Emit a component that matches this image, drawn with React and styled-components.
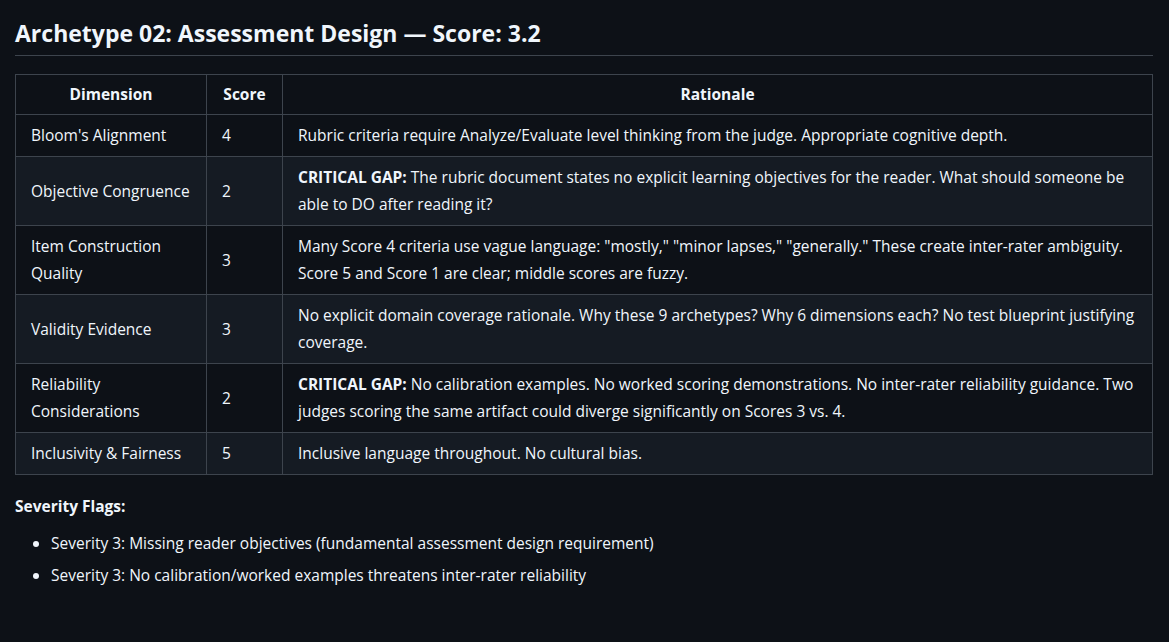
import React from "react";
import styled, { createGlobalStyle } from "styled-components";

const G = createGlobalStyle`
  body { margin:0; background:#0d1117; color:#f0f6fc; font-family: "Open Sans", "Liberation Sans", sans-serif; font-size:15.5px; }
`;
const Page = styled.div`padding:17px 16px 20px 15px;`;
const H = styled.h2`margin:0 0 18px; font-size:23px; font-weight:700; line-height:1.4; padding-bottom:6px; border-bottom:1px solid #3d444d;`;
const Table = styled.table`border-collapse:collapse; width:100%; table-layout:fixed;`;
const Th = styled.th`border:1px solid #3d444d; padding:7px 15px; line-height:25px; font-weight:700; text-align:center;`;
const Td = styled.td`border:1px solid #3d444d; padding:7px 15px; line-height:27px; vertical-align:middle;`;
const Tr = styled.tr`background:${p => p.$alt ? "#151b23" : "#0d1117"};`;
const P = styled.p`margin:20px 0 14px; font-weight:700;`;
const Ul = styled.ul`margin:0; padding-left:36px; li{line-height:24px; margin-bottom:8px;}`;

const rows = [
  ["Bloom's Alignment", 4, null, "Rubric criteria require Analyze/Evaluate level thinking from the judge. Appropriate cognitive depth."],
  ["Objective Congruence", 2, "CRITICAL GAP:", " The rubric document states no explicit learning objectives for the reader. What should someone be able to DO after reading it?"],
  ["Item Construction Quality", 3, null, "Many Score 4 criteria use vague language: \"mostly,\" \"minor lapses,\" \"generally.\" These create inter-rater ambiguity. Score 5 and Score 1 are clear; middle scores are fuzzy."],
  ["Validity Evidence", 3, null, "No explicit domain coverage rationale. Why these 9 archetypes? Why 6 dimensions each? No test blueprint justifying coverage."],
  ["Reliability Considerations", 2, "CRITICAL GAP:", " No calibration examples. No worked scoring demonstrations. No inter-rater reliability guidance. Two judges scoring the same artifact could diverge significantly on Scores 3 vs. 4."],
  ["Inclusivity & Fairness", 5, null, "Inclusive language throughout. No cultural bias."],
];

export default function App() {
  return (
    <Page>
      <G />
      <H>Archetype 02: Assessment Design — Score: 3.2</H>
      <Table>
        <colgroup><col style={{width:191}} /><col style={{width:76}} /><col /></colgroup>
        <thead><tr><Th>Dimension</Th><Th>Score</Th><Th>Rationale</Th></tr></thead>
        <tbody>
          {rows.map((r, i) => (
            <Tr key={i} $alt={i % 2 === 1}>
              <Td>{r[0]}</Td><Td>{r[1]}</Td>
              <Td>{r[2] && <strong>{r[2]}</strong>}{r[3]}</Td>
            </Tr>
          ))}
        </tbody>
      </Table>
      <P>Severity Flags:</P>
      <Ul>
        <li>Severity 3: Missing reader objectives (fundamental assessment design requirement)</li>
        <li>Severity 3: No calibration/worked examples threatens inter-rater reliability</li>
      </Ul>
    </Page>
  );
}
